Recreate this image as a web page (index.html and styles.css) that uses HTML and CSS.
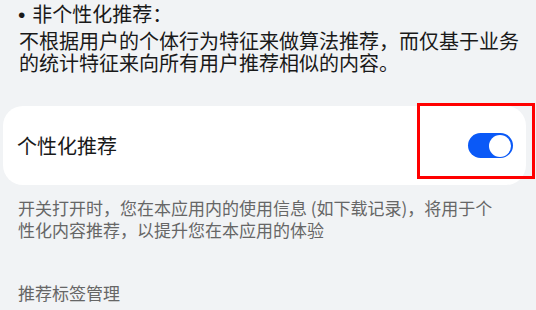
FILE: index.html
```html
<!DOCTYPE html>
<html lang="zh-CN">
<head>
<meta charset="utf-8">
<title>个性化推荐</title>
<link rel="stylesheet" href="styles.css">
</head>
<body>
  <div class="intro">
    <p class="intro-title"><span class="bullet">•</span>非个性化推荐：</p>
    <p class="intro-body">不根据用户的个体行为特征来做算法推荐，而仅基于业务的统计特征来向所有用户推荐相似的内容。</p>
  </div>
  <div class="card">
    <span class="card-label">个性化推荐</span>
    <span class="switch"><span class="knob"></span></span>
  </div>
  <p class="note">开关打开时，您在本应用内的使用信息 (如下载记录)，将用于个性化内容推荐，以提升您在本应用的体验</p>
  <p class="section-title">推荐标签管理</p>
  <div class="highlight"></div>
</body>
</html>
```

FILE: styles.css
```css
html, body {
  margin: 0;
  padding: 0;
}
body {
  width: 536px;
  height: 310px;
  overflow: hidden;
  background: #f1f3f5;
  font-family: "Noto Sans CJK SC", "Noto Sans", sans-serif;
  color: #191919;
}
p {
  margin: 0;
}
.intro {
  padding: 3px 10px 0 19px;
}
.intro-title,
.intro-body {
  font-size: 20px;
  line-height: 22px;
}
.bullet {
  font-family: "Liberation Sans", sans-serif;
  font-size: 21px;
  margin-left: -1px;
  margin-right: 7px;
}
.intro-body {
  margin-top: 4px;
}
.card {
  margin: 32px 10px 0 3px;
  height: 79px;
  background: #ffffff;
  border-radius: 20px;
  display: flex;
  align-items: center;
  justify-content: space-between;
  padding: 0 13px 0 14px;
}
.card-label {
  font-size: 20px;
  line-height: 22px;
}
.switch {
  width: 45px;
  height: 25px;
  box-sizing: border-box;
  border-radius: 13px;
  background: #0a59f7;
  display: flex;
  align-items: center;
  justify-content: flex-end;
  padding: 0 2px;
}
.knob {
  width: 22px;
  height: 22px;
  border-radius: 50%;
  background: #ffffff;
}
.note {
  margin: 12px 30px 0 18px;
  font-size: 17px;
  line-height: 22px;
  color: #666666;
}
.section-title {
  margin: 41px 0 0 18px;
  font-size: 17px;
  line-height: 22px;
  color: #666666;
}
.highlight {
  position: absolute;
  left: 417px;
  top: 103px;
  width: 118px;
  height: 76px;
  box-sizing: border-box;
  border: 3px solid #ff0000;
}
```
